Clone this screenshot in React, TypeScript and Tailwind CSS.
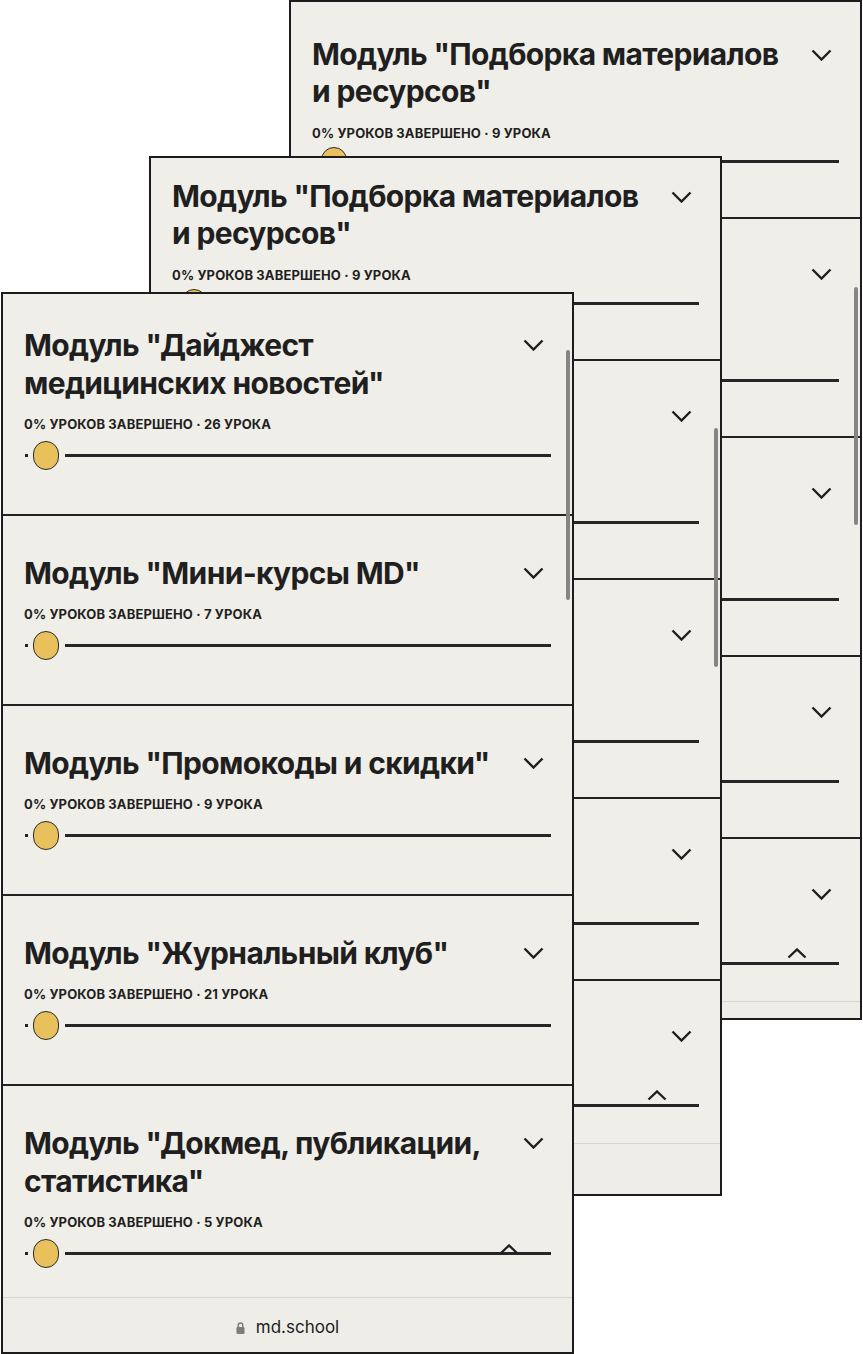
import clsx from 'clsx';

interface ModuleItem {
  title: string;
  lessons: string;
}

const frontModules: ModuleItem[] = [
  { title: 'Модуль "Дайджест медицинских новостей"', lessons: '26 урока' },
  { title: 'Модуль "Мини-курсы MD"', lessons: '7 урока' },
  { title: 'Модуль "Промокоды и скидки"', lessons: '9 урока' },
  { title: 'Модуль "Журнальный клуб"', lessons: '21 урока' },
  { title: 'Модуль "Докмед, публикации, статистика"', lessons: '5 урока' },
];

const rearModules: ModuleItem[] = [
  { title: 'Модуль "Подборка материалов и ресурсов"', lessons: '9 урока' },
  { title: 'Модуль "Дайджест медицинских новостей"', lessons: '26 урока' },
  { title: 'Модуль "Методические материалы"', lessons: '12 урока' },
  { title: 'Модуль "Мини-курсы MD"', lessons: '7 урока' },
  { title: 'Модуль "Вводный урок"', lessons: '3 урока' },
  { title: 'Модуль "Промокоды и скидки"', lessons: '9 урока' },
];

function ChevronDown() {
  return (
    <svg width="21" height="12" viewBox="0 0 21 12" fill="none">
      <path d="M1.5 1.5 10.5 10.5 19.5 1.5" stroke="#1f1f1f" strokeWidth="2.4" />
    </svg>
  );
}

function ChevronUp() {
  return (
    <svg width="20" height="11" viewBox="0 0 20 11" fill="none">
      <path d="M1.5 9.5 10 1.5 18.5 9.5" stroke="#1f1f1f" strokeWidth="2.4" />
    </svg>
  );
}

function Lock() {
  return (
    <svg width="9" height="13" viewBox="0 0 9 13" fill="none">
      <path d="M2.2 6.5V4.3a2.3 2.3 0 0 1 4.6 0v2.2" stroke="#7d7d7b" strokeWidth="1.5" />
      <rect x="0.5" y="6" width="8" height="7" rx="1.3" fill="#7d7d7b" />
    </svg>
  );
}

function ModuleRow({ item, compact }: { item: ModuleItem; compact: boolean }) {
  return (
    <div
      className={clsx(
        'border-b-2 border-[#222] px-[21px]',
        compact ? 'pt-[36px] pb-[41px]' : 'pt-[38px] pb-[44px]',
      )}
    >
      <div className="flex items-start gap-[19px]">
        <h3
          className={clsx(
            'flex-1 text-[30px] font-bold tracking-[-0.022em] text-[#1f1f1f]',
            compact ? 'leading-[37px]' : 'leading-[38px]',
          )}
        >
          {item.title}
        </h3>
        <div className={clsx('mr-[7px] flex items-center', compact ? 'h-[37px]' : 'h-[38px]')}>
          <ChevronDown />
        </div>
      </div>
      <p
        className={clsx(
          'text-[13px] font-bold uppercase leading-[16px] tracking-[0.01em] text-[#1f1f1f]',
          compact ? 'mt-[15px]' : 'mt-[14px]',
        )}
      >
        0% уроков завершено · {item.lessons}
      </p>
      <div className={clsx('flex items-center', compact ? 'mt-[6px]' : 'mt-[9px]')}>
        <span className="ml-[1px] h-[3px] w-[3px] bg-[#222]" />
        <span className="ml-[5px] h-[29px] w-[26px] rounded-full border-[1.5px] border-[#2b2b2b] bg-[#e8c15c]" />
        <span className="ml-[6px] h-[3px] flex-1 bg-[#262626]" />
      </div>
    </div>
  );
}

interface PanelProps {
  className: string;
  modules: ModuleItem[];
  compact: boolean;
  offsetClass: string;
  scrollbarClass: string;
  footerClass: string;
}

function PhonePanel({ className, modules, compact, offsetClass, scrollbarClass, footerClass }: PanelProps) {
  return (
    <div className={clsx('absolute flex flex-col overflow-hidden border-2 border-[#1c1c1c] bg-[#f0eee8]', className)}>
      <div className="relative min-h-0 flex-1 overflow-hidden">
        <div className={offsetClass}>
          {modules.map(item => (
            <ModuleRow key={item.title} item={item} compact={compact} />
          ))}
        </div>
        <span className={clsx('absolute right-[2px] w-[4px] rounded-full bg-[#858583]', scrollbarClass)} />
        <button className="absolute right-[53px] bottom-[42px] flex">
          <ChevronUp />
        </button>
      </div>
      <div
        className={clsx(
          'flex shrink-0 items-center justify-center gap-[11px] border-t border-[#d8d6d0] bg-[#efede7] pt-[5px]',
          footerClass,
        )}
      >
        <Lock />
        <span className="text-[17px] text-[#1c1c1c]">md.school</span>
      </div>
    </div>
  );
}

export default function App() {
  return (
    <div className="relative h-[1354px] w-[863px] overflow-hidden bg-white font-['Inter',sans-serif]">
      <PhonePanel
        className="left-[289px] top-0 h-[1020px] w-[573px]"
        modules={rearModules}
        compact
        offsetClass="-mt-[2px]"
        scrollbarClass="top-[285px] h-[238px]"
        footerClass="h-[17px]"
      />
      <PhonePanel
        className="left-[149px] top-[156px] h-[1040px] w-[573px]"
        modules={rearModules}
        compact
        offsetClass="-mt-[16px]"
        scrollbarClass="top-[270px] h-[239px]"
        footerClass="h-[51px]"
      />
      <PhonePanel
        className="left-[1px] top-[292px] h-[1062px] w-[573px]"
        modules={frontModules}
        compact={false}
        offsetClass="-mt-[6px]"
        scrollbarClass="top-[56px] h-[250px]"
        footerClass="h-[55px]"
      />
    </div>
  );
}
